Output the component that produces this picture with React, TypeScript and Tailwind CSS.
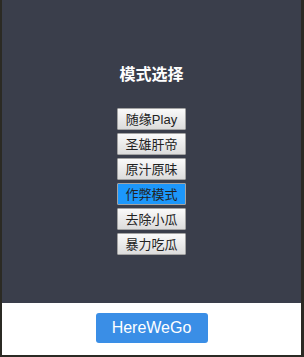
import React from "react";

const modes = ["随缘Play", "圣雄肝帝", "原汁原味", "作弊模式", "去除小瓜", "暴力吃瓜"];

export default function App() {
  return (
    <div className="w-[304px] h-[357px] flex flex-col border-l-2 border-r-[3px] border-b-[2px] border-[#2b2a24] bg-white">
      <div className="h-[303px] bg-[#3a3e4b] flex flex-col items-center pt-[61px]">
        <div
          className="text-white font-bold text-[16px] leading-[24px]"
          style={{ fontFamily: '"Microsoft YaHei", "Noto Sans CJK SC", sans-serif' }}
        >
          模式选择
        </div>
        <div className="mt-[23px] flex flex-col items-center gap-[3px]">
          {modes.map((m, i) => (
            <button
              key={m}
              className={
                "w-[69px] h-[22px] flex items-center justify-center text-[13px] leading-none border border-[#a3a3a3] rounded-[1px] text-[#222] " +
                (i === 3
                  ? "bg-[#1c97fb]"
                  : "bg-gradient-to-b from-[#fafafa] to-[#dcdcdc]")
              }
              style={{ fontFamily: '"Liberation Sans", Arial, "Noto Sans CJK SC", sans-serif' }}
            >
              {m}
            </button>
          ))}
        </div>
      </div>
      <div className="flex-1 flex items-start justify-center pt-[10px] bg-white">
        <button
          className="w-[112px] h-[30px] bg-[#3a8ee6] rounded-[3px] text-white text-[16px] leading-none"
          style={{ fontFamily: '"Liberation Sans", Arial, sans-serif' }}
        >
          HereWeGo
        </button>
      </div>
    </div>
  );
}
